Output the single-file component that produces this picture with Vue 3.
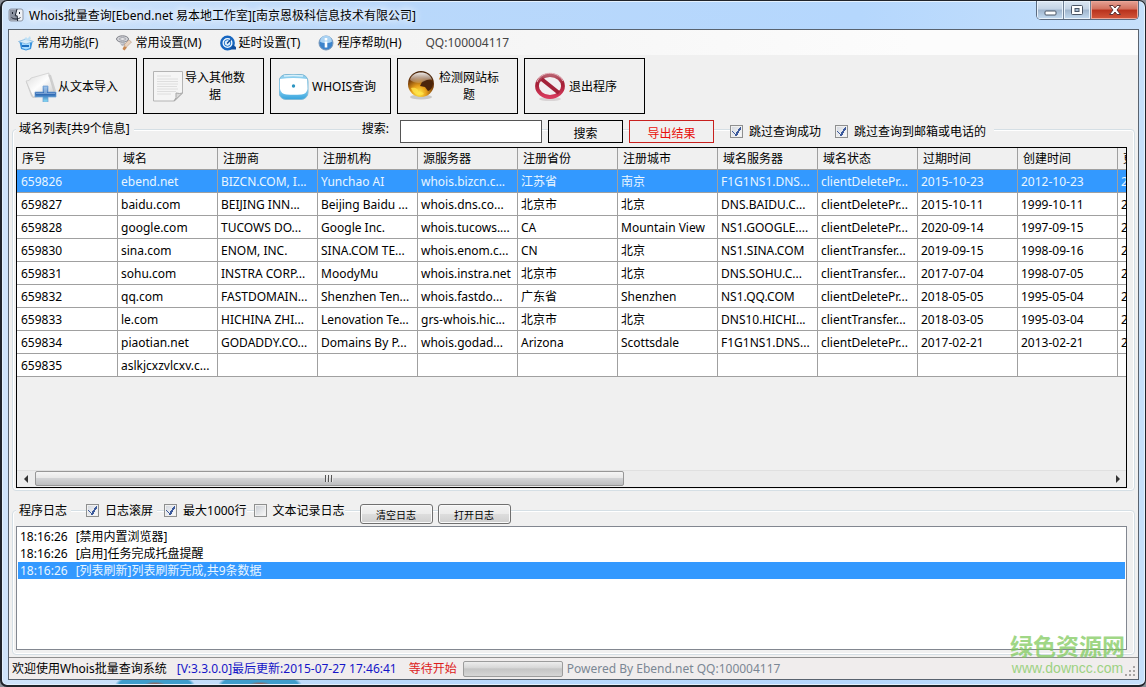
<script setup>
import { ref } from 'vue'

const menus = [
  { icon: 'box', label: '常用功能(F)' },
  { icon: 'tools', label: '常用设置(M)' },
  { icon: 'clock', label: '延时设置(T)' },
  { icon: 'info', label: '程序帮助(H)' }
]

const tools = [
  { icon: 'import', label: '从文本导入' },
  { icon: 'page', label: '导入其他数\n据' },
  { icon: 'whois', label: 'WHOIS查询' },
  { icon: 'globe', label: '检测网站标\n题' },
  { icon: 'exit', label: '退出程序' }
]

const columns = ['序号', '域名', '注册商', '注册机构', '源服务器', '注册省份', '注册城市', '域名服务器', '域名状态', '过期时间', '创建时间', '更']

const rows = [
  ['659826', 'ebend.net', 'BIZCN.COM, I...', 'Yunchao AI', 'whois.bizcn.c...', '江苏省', '南京', 'F1G1NS1.DNS...', 'clientDeletePr...', '2015-10-23', '2012-10-23', '2'],
  ['659827', 'baidu.com', 'BEIJING INN...', 'Beijing Baidu ...', 'whois.dns.co...', '北京市', '北京', 'DNS.BAIDU.C...', 'clientDeletePr...', '2015-10-11', '1999-10-11', '2'],
  ['659828', 'google.com', 'TUCOWS DO...', 'Google Inc.', 'whois.tucows....', 'CA', 'Mountain View', 'NS1.GOOGLE....', 'clientDeletePr...', '2020-09-14', '1997-09-15', '2'],
  ['659830', 'sina.com', 'ENOM, INC.', 'SINA.COM TE...', 'whois.enom.c...', 'CN', '北京', 'NS1.SINA.COM', 'clientTransfer...', '2019-09-15', '1998-09-16', '2'],
  ['659831', 'sohu.com', 'INSTRA CORP...', 'MoodyMu', 'whois.instra.net', '北京市', '北京', 'DNS.SOHU.C...', 'clientTransfer...', '2017-07-04', '1998-07-05', '2'],
  ['659832', 'qq.com', 'FASTDOMAIN...', 'Shenzhen Ten...', 'whois.fastdo...', '广东省', 'Shenzhen', 'NS1.QQ.COM', 'clientDeletePr...', '2018-05-05', '1995-05-04', '2'],
  ['659833', 'le.com', 'HICHINA ZHI...', 'Lenovation Te...', 'grs-whois.hic...', '北京市', '北京', 'DNS10.HICHI...', 'clientTransfer...', '2018-03-05', '1995-03-04', '2'],
  ['659834', 'piaotian.net', 'GODADDY.CO...', 'Domains By P...', 'whois.godad...', 'Arizona', 'Scottsdale', 'F1G1NS1.DNS...', 'clientDeletePr...', '2017-02-21', '2013-02-21', '2'],
  ['659835', 'aslkjcxzvlcxv.c...', '', '', '', '', '', '', '', '', '', '']
]

const logs = [
  { time: '18:16:26', text: '[禁用内置浏览器]' },
  { time: '18:16:26', text: '[启用]任务完成托盘提醒' },
  { time: '18:16:26', text: '[列表刷新]列表刷新完成,共9条数据' }
]

const selectedRow = ref(0)
const selectedLog = ref(2)
const keyword = ref('')
const skipDone = ref(true)
const skipContact = ref(true)
const autoScroll = ref(true)
const maxLines = ref(true)
const fileLog = ref(false)
</script>

<template>
  <div class="window">
    <header class="titlebar">
      <svg class="app-icon" viewBox="0 0 16 16" aria-hidden="true">
        <rect x="1" y="2" width="14" height="12" rx="2" fill="#eef1f6" stroke="#8d96a6" />
        <path d="M2 2.500h6.500L7 9h2l.5 4.500H3a1.500 1.500 0 0 1-1.500-1.500V3z" fill="#8b92a1" />
        <path d="M4.500 5v2M11.500 5v2" stroke="#1b2230" />
        <path d="M9 2 7.200 8.800h2L9.600 14M3.500 10.500c2.500 2 6.500 2 9 0" fill="none" stroke="#1b2230" />
      </svg>
      <h1 class="title">Whois批量查询[Ebend.net 易本地工作室][南京恩极科信息技术有限公司]</h1>
      <div class="controls">
        <button class="ctl min" aria-label="最小化">
          <svg viewBox="0 0 14 12"><rect x="2" y="7" width="11" height="4" rx="1" fill="#fff" stroke="#4b5666" /></svg>
        </button>
        <button class="ctl max" aria-label="最大化">
          <svg viewBox="0 0 14 12"><rect x="1.500" y="1.500" width="11" height="9" rx="1" fill="#fff" stroke="#4b5666" /><rect x="5" y="4.500" width="4" height="3" fill="#a9bdd2" stroke="#4b5666" /></svg>
        </button>
        <button class="ctl close" aria-label="关闭">
          <svg viewBox="0 0 14 12"><path d="M1.500 1.500h3.500l2 2.500 2-2.500h3.500L9 6l3.500 4.500H9L7 8l-2 2.500H1.500L5 6z" fill="#fff" stroke="#5e3434" /></svg>
        </button>
      </div>
    </header>

    <main class="client">
      <nav class="menubar">
        <button v-for="m in menus" :key="m.label" class="menu">
          <svg class="menu-icon" viewBox="0 0 16 16" aria-hidden="true">
            <g v-if="m.icon === 'box'">
              <path d="M1.500 7 8 4.500 14.500 7 13 14 8 15.500 3 14z" fill="#3a93de" />
              <path d="M4 7.500h8v5.500l-4 1.500-4-1.500z" fill="#a8dcff" />
              <path d="M.5 6.500 8 4l7.500 2.500L8 9z" fill="#d8ebf8" stroke="#78b3de" stroke-width=".7" />
              <path d="M6 4l2-2 1.500 1.500L12 1l1 3-3 2z" fill="#bfe0f5" />
              <path d="M4 10h7v2H4z" fill="#1d6fc2" />
            </g>
            <g v-else-if="m.icon === 'tools'">
              <ellipse cx="6.500" cy="4" rx="6" ry="3.200" fill="#d2d3d8" stroke="#80828a" />
              <ellipse cx="6.500" cy="4" rx="3" ry="1.300" fill="#f5f5f7" stroke="#8b8d95" stroke-width=".8" />
              <path d="M3 7c2 2 4 2 6 0l1 3-4 1z" fill="#b4b6be" />
              <path d="m8 10 5-5 2.500 2-5 5z" fill="#e9d3c0" stroke="#b9977d" stroke-width=".6" />
              <path d="m8 11 3 1.500L8.500 15.500l-2-1.500z" fill="#c98851" />
            </g>
            <g v-else-if="m.icon === 'clock'">
              <circle cx="7.500" cy="8" r="6.200" fill="#f6fbff" stroke="#1666c0" stroke-width="2.400" />
              <path d="M10 14.500h6V12l-3-2z" fill="#0e4e9f" />
              <circle cx="7.500" cy="8" r="3.300" fill="#e0f1fc" stroke="#1c73cc" />
              <path d="M7 8.500 11 4.500" stroke="#0d4794" stroke-width="1.500" />
            </g>
            <g v-else>
              <circle cx="8" cy="8" r="7" fill="#3c84cc" stroke="#7797ba" />
              <path d="M2 6.500a6 6 0 0 1 12 0c-2.500 2-9.500 2-12 0z" fill="#a9d2f3" />
              <path d="M8 3v2.500M8 6.500v6" stroke="#fff" stroke-width="2.600" />
            </g>
          </svg>
          <span>{{ m.label }}</span>
        </button>
        <span class="contact">QQ:100004117</span>
      </nav>

      <div class="toolbar">
        <button v-for="t in tools" :key="t.icon" class="tool">
          <svg class="tool-icon" viewBox="0 0 32 32" aria-hidden="true">
            <defs>
              <linearGradient id="paper" x1="0" y1="0" x2="1" y2="1"><stop offset="0" stop-color="#dcdcdc" /><stop offset=".5" stop-color="#fdfdfd" /><stop offset="1" stop-color="#c9c9c9" /></linearGradient>
              <linearGradient id="plus" x1="0" y1="0" x2="0" y2="1"><stop offset="0" stop-color="#90b8e4" /><stop offset=".5" stop-color="#2b62b0" /><stop offset="1" stop-color="#8ee6fa" /></linearGradient>
              <linearGradient id="tile" x1="0" y1="0" x2="0" y2="1"><stop offset="0" stop-color="#8ccdec" /><stop offset=".55" stop-color="#8fd3f4" /><stop offset="1" stop-color="#35a3dc" /></linearGradient>
              <radialGradient id="amber" cx=".42" cy=".85" r=".8"><stop offset="0" stop-color="#fff04a" /><stop offset=".35" stop-color="#e8a01b" /><stop offset=".75" stop-color="#70370a" /><stop offset="1" stop-color="#4a2408" /></radialGradient>
              <linearGradient id="gloss" x1="0" y1="0" x2="0" y2="1"><stop offset="0" stop-color="#fff" stop-opacity=".9" /><stop offset="1" stop-color="#fff" stop-opacity=".15" /></linearGradient>
              <linearGradient id="ban" x1="0" y1="0" x2="0" y2="1"><stop offset="0" stop-color="#b8606e" /><stop offset=".4" stop-color="#a31e35" /><stop offset="1" stop-color="#d83a5d" /></linearGradient>
            </defs>
            <g v-if="t.icon === 'import'">
              <path d="M1 12q3 0 4-3L23 4l3 1 5 16q-3 3-6 3L9 28q-2 0-3-2z" fill="#cfcfcf" />
              <path d="M1 11q4 0 5-3L24 3q-1 3 1 6l4 13L8 27z" fill="url(#paper)" stroke="#c5c5c5" stroke-width=".6" />
              <path d="M18 16h5v6h8v5h-8v5h-5v-5h-8v-5h8z" fill="url(#plus)" stroke="#6f9ed2" stroke-width=".7" />
              <path d="M19 17h3v6h8v1H11v-1h8z" fill="#b9d8f2" opacity=".5" />
            </g>
            <g v-else-if="t.icon === 'page'">
              <path d="M1.500 1.500h29V23l-8 8h-21z" fill="#f5f5f5" stroke="#b4b4b4" />
              <path d="M5 6h14M5 9h21M5 11.500h21M5 14h21M5 16.500h20M5 19h21M5 21.500h19M5 24h14" stroke="#dedede" />
              <path d="M22 31q3-3 2-8 4 1 6.500 0z" fill="#dadada" stroke="#a8a8a8" />
            </g>
            <g v-else-if="t.icon === 'whois'">
              <rect x="0" y="4.500" width="29" height="25" rx="7" fill="url(#tile)" stroke="#82bad6" />
              <path d="M1 9q13-2 27 0l.5 10q-1 5-6 5.500-8 .5-15 0-5.500-.5-6.500-5.500z" fill="#fff" />
              <path d="M5 6q9-1 19 0" fill="none" stroke="#d9f1fb" stroke-width="1.500" />
              <circle cx="14.500" cy="16" r="1.700" fill="#2c95c2" />
            </g>
            <g v-else-if="t.icon === 'globe'">
              <ellipse cx="15" cy="27" rx="11" ry="2.500" fill="#c8c8c8" />
              <circle cx="15" cy="14" r="13" fill="url(#amber)" />
              <path d="M16 12c4-3 9-2 11 0 0 5-2 8-5 9l-3-4-5-1z" fill="#4b250b" />
              <path d="M5 18c4-1 8 1 7 4 2-1 5 0 6 2-5 3-11 0-13-6z" fill="#ffe34b" opacity=".8" />
              <path d="M4 10C6 0 24 0 26 10c-3-1-6 0-9 2-4 2-9 1-13-2z" fill="url(#gloss)" />
            </g>
            <g v-else>
              <ellipse cx="17" cy="29" rx="11" ry="2" fill="#d8d4d5" />
              <ellipse cx="17" cy="16" rx="13" ry="11" fill="#f1eef0" stroke="url(#ban)" stroke-width="3.800" />
              <path d="M8.500 9 26 23" stroke="#a32139" stroke-width="3.800" />
              <path d="M4 12c4-11 20-12 26-1" fill="none" stroke="#e9b7c0" stroke-width="1" />
            </g>
          </svg>
          <span class="tool-label">{{ t.label }}</span>
        </button>
      </div>

      <section class="group results">
        <div class="group-head">
          <h2 class="group-title">域名列表[共9个信息]</h2>
          <label class="search-label" for="keyword">搜索:</label>
          <input id="keyword" v-model="keyword" class="search" type="text">
          <button class="flat search-btn">搜索</button>
          <button class="flat export-btn">导出结果</button>
          <label class="check skip"><input v-model="skipDone" type="checkbox"><span>跳过查询成功</span></label>
          <label class="check skip"><input v-model="skipContact" type="checkbox"><span>跳过查询到邮箱或电话的</span></label>
        </div>
        <div class="grid">
          <div class="grid-view">
            <table>
              <colgroup>
                <col v-for="(c, i) in columns" :key="c" :class="i ? 'col' : 'col-first'">
              </colgroup>
              <thead>
                <tr><th v-for="c in columns" :key="c" scope="col">{{ c }}</th></tr>
              </thead>
              <tbody>
                <tr v-for="(r, i) in rows" :key="r[0]" :class="{ selected: i === selectedRow }" @click="selectedRow = i">
                  <td v-for="(cell, j) in r" :key="j">{{ cell }}</td>
                </tr>
              </tbody>
            </table>
          </div>
          <div class="scrollbar">
            <button class="arrow" aria-label="向左滚动"><svg viewBox="0 0 4 8"><path d="M4 0v8L0 4z" fill="#333" /></svg></button>
            <div class="track">
              <div class="thumb"><i></i><i></i><i></i></div>
            </div>
            <button class="arrow" aria-label="向右滚动"><svg viewBox="0 0 4 8"><path d="M0 0v8l4-4z" fill="#333" /></svg></button>
          </div>
        </div>
      </section>

      <section class="group journal">
        <div class="group-head">
          <h2 class="group-title">程序日志</h2>
          <label class="check"><input v-model="autoScroll" type="checkbox"><span>日志滚屏</span></label>
          <label class="check"><input v-model="maxLines" type="checkbox"><span>最大1000行</span></label>
          <label class="check"><input v-model="fileLog" type="checkbox"><span>文本记录日志</span></label>
          <button class="aero first">清空日志</button>
          <button class="aero">打开日志</button>
        </div>
        <ul class="log">
          <li v-for="(l, i) in logs" :key="i" :class="{ selected: i === selectedLog }" @click="selectedLog = i">
            <time>{{ l.time }}</time><span>{{ l.text }}</span>
          </li>
        </ul>
      </section>

      <footer class="status">
        <span class="welcome">欢迎使用Whois批量查询系统</span>
        <span class="version">[V:3.3.0.0]最后更新:2015-07-27 17:46:41</span>
        <span class="state">等待开始</span>
        <div class="progress" role="progressbar" aria-label="进度" aria-valuenow="0"></div>
        <span class="powered">Powered By Ebend.net QQ:100004117</span>
        <svg class="grip" viewBox="0 0 11 11" aria-hidden="true"><path d="M8 0h2v2H8zM8 4h2v2H8zM4 4h2v2H4zM8 8h2v2H8zM4 8h2v2H4zM0 8h2v2H0z" fill="#a8a5a4" /></svg>
      </footer>
    </main>

    <div class="watermark">
      <strong>绿色资源网</strong>
      <span>www.downcc.com</span>
    </div>
  </div>
</template>

<style>
body {
  background: #8a8f98;
}
</style>

<style scoped>
* {
  box-sizing: border-box;
}

.window {
  position: relative;
  display: flex;
  flex-direction: column;
  min-height: 100vh;
  padding: 0 6px 5px;
  border: 1px solid #20242b;
  border-width: 1px 1px 2px 2px;
  border-radius: 7px;
  background:
    radial-gradient(ellipse 40px 12px at 153px 100%, #8a6a66 0 12%, #3f9dcc 28% 90%, transparent) no-repeat,
    radial-gradient(ellipse 42px 12px at 258px 100%, #8a6a66 0 12%, #3f9dcc 28% 90%, transparent) no-repeat,
    linear-gradient(90deg, #cfe3fa, #b9d8fb 35%, #b5d7fd 75%, #c6e0fb);
  box-shadow: inset 0 0 0 1px #e4f1fe;
  font: 12px/17px "Noto Sans", "Noto Sans CJK SC", sans-serif;
  color: #000;
}

button,
input {
  margin: 0;
  padding: 0;
  border: 0;
  background: none;
  font: inherit;
  color: inherit;
}

h1,
h2 {
  margin: 0;
  font: inherit;
}

.titlebar {
  display: flex;
  align-items: center;
  height: 28px;
}

.app-icon {
  width: 16px;
  height: 16px;
}

.title {
  flex: 1;
  margin-left: 5px;
  white-space: nowrap;
  text-shadow: 0 0 6px #fff, 0 0 10px #fff;
}

.controls {
  display: flex;
  align-self: flex-start;
  border: 1px solid #5b6b80;
  border-top: 0;
  border-radius: 0 0 5px 5px;
  overflow: hidden;
}

.ctl {
  display: flex;
  align-items: center;
  justify-content: center;
  width: 27px;
  height: 18px;
  border-right: 1px solid #6f8095;
  background: linear-gradient(#dce7f3, #c3d3e5 45%, #9fb4cc 50%, #c4dcf2);
  box-shadow: inset 0 0 0 1px #e9f2fb;
}

.ctl svg {
  width: 14px;
  height: 12px;
}

.close {
  width: 47px;
  border-right: 0;
  background: linear-gradient(#e5a295, #d2705d 45%, #b8321d 50%, #d3583c);
  box-shadow: inset 0 0 0 1px #eda798;
}

.client {
  display: flex;
  flex: 1;
  flex-direction: column;
  border: 1px solid #59636f;
  background: #f0f0f0;
}

.menubar {
  display: flex;
  align-items: center;
  height: 25px;
  padding-left: 9px;
  background: linear-gradient(90deg, #f0f0f0, #f4f4f4 35%, #fcfcfc 80%);
}

.menu {
  display: flex;
  align-items: center;
  gap: 3px;
  margin-right: 18px;
  white-space: nowrap;
}

.menu-icon {
  width: 16px;
  height: 16px;
}

.contact {
  margin-left: 6px;
  color: #444;
}

.toolbar {
  display: flex;
  gap: 6px;
  padding: 3px 7px 0;
}

.tool {
  display: flex;
  align-items: center;
  gap: 1px;
  width: 121px;
  height: 56px;
  padding-left: 8px;
  border: 1px solid #000;
}

.tool-icon {
  width: 32px;
  height: 32px;
}

.tool:last-child {
  gap: 4px;
}

.tool-label {
  white-space: pre-line;
}

.group {
  position: relative;
  display: flex;
  flex-direction: column;
  margin: 0 3px;
  padding: 0 8px 4px 4px;
}

.group::before {
  content: "";
  position: absolute;
  inset: 9px 0 0;
  border: 1px solid #d5dfe5;
  border-radius: 4px;
  box-shadow: inset 0 0 0 1px #fff;
  pointer-events: none;
}

.group-head {
  position: relative;
  display: flex;
  align-items: center;
  white-space: nowrap;
}

.group-title,
.check,
.search-label {
  background: #f0f0f0;
}

.results {
  flex: 1;
  margin-top: 6px;
  padding-bottom: 3px;
}

.results .group-head {
  height: 23px;
}

.group-title {
  padding: 0 4px 0 3px;
}

.results .group-title,
.search-label {
  align-self: flex-start;
}

.search-label {
  margin-left: auto;
  padding-right: 11px;
}

.results .group-title {
  min-width: 118px;
}

.search {
  width: 142px;
  height: 23px;
  padding: 0 4px;
  border: 1px solid #555;
  background: #fff;
}

.flat {
  height: 23px;
  margin-left: 6px;
  padding-top: 3px;
  border: 1px solid #000;
  background: #f0f0f0;
}

.search-btn {
  width: 75px;
}

.export-btn {
  width: 85px;
  border-color: #c8201e;
  color: #e8100c;
}

.check {
  display: flex;
  align-items: center;
  gap: 6px;
}

.check input {
  appearance: none;
  width: 13px;
  height: 13px;
  border: 1px solid #8e8f8f;
  background: linear-gradient(135deg, #cbcfd5, #f6f6f6) content-box #f4f4f4;
  padding: 1px;
}

.check input:checked {
  background:
    linear-gradient(45deg, transparent 44%, #3c5a9c 44% 62%, transparent 62%) 1px 5px / 4px 4px no-repeat,
    linear-gradient(122deg, transparent 42%, #3c5a9c 42% 62%, transparent 62%) 4px 1px / 6px 9px no-repeat,
    linear-gradient(135deg, #d5d9e0, #fafafa) content-box #f4f4f4;
}

.skip {
  padding-right: 8px;
}

.export-btn + .skip {
  margin-left: 16px;
  padding-right: 14px;
}

.skip:last-child {
  margin-right: 133px;
}

.grid {
  position: relative;
  display: flex;
  flex: 1;
  flex-direction: column;
  margin-top: 4px;
  border: 1px solid #000;
}

.grid-view {
  flex: 1;
  overflow: hidden;
}

table {
  width: 1201px;
  table-layout: fixed;
  border-collapse: separate;
  border-spacing: 0;
}

.col-first {
  width: 101px;
}

.col {
  width: 100px;
}

th,
td {
  overflow: hidden;
  padding: 0 0 0 3px;
  border: 0 solid #a0a0a0;
  border-width: 0 1px 1px 0;
  font-weight: 400;
  text-align: left;
  white-space: nowrap;
}

td:first-child {
  padding-left: 4px;
}

th {
  height: 22px;
  padding-left: 5px;
}

td {
  height: 23px;
  background: #fff;
}

.selected,
.selected td {
  background: #3399ff;
  color: #e9f6ff;
}

.scrollbar {
  display: flex;
  height: 17px;
  border-top: 1px solid #e0e0e0;
  background: #ececec;
}

.arrow {
  display: flex;
  align-items: center;
  justify-content: center;
  width: 17px;
}

.arrow svg {
  width: 4px;
  height: 8px;
}

.track {
  flex: 1;
  padding-left: 1px;
}

.thumb {
  display: flex;
  align-items: center;
  justify-content: center;
  gap: 1px;
  width: 54.8%;
  height: 15px;
  border: 1px solid #979797;
  border-radius: 2px;
  background: linear-gradient(#f5f5f5, #e8e8e8 45%, #d2d3d5 50%, #bdbec0);
}

.thumb i {
  width: 2px;
  height: 7px;
  border-left: 1px solid #555;
  background: #e8e8e8;
}

.journal {
  margin-top: 11px;
  padding-bottom: 5px;
}

.journal::before {
  inset: 8px 0 0;
}

.journal .group-head {
  height: 24px;
}

.journal .group-head > * {
  margin-bottom: 8px;
}

.journal .check {
  margin-left: 7px;
}

.journal .group-title + .check {
  margin-left: 15px;
  padding-right: 4px;
}

.journal .group-head .aero {
  align-self: flex-end;
  width: 73px;
  height: 20px;
  margin: 0 0 2px 5px;
  padding-top: 2px;
  border: 1px solid #707070;
  border-radius: 3px;
  background: linear-gradient(#f3f3f3, #ebebeb 48%, #dddddd 52%, #cfcfcf);
  box-shadow: inset 0 0 0 1px #fafafa;
  font-size: 10px;
  line-height: 14px;
}

.journal .group-head .first {
  margin-left: 15px;
}

.log {
  position: relative;
  min-height: 124px;
  margin: 0;
  padding: 1px;
  border: 1px solid #828790;
  background: #fff;
  list-style: none;
}

.log li {
  display: flex;
  gap: 8px;
  padding-left: 2px;
}

.status {
  display: flex;
  align-items: center;
  height: 22px;
  margin-top: 2px;
  padding: 0 2px 0 3px;
  border-top: 1px solid #8e8e8e;
  background: #f0eded;
  white-space: nowrap;
}

.version {
  margin-left: 10px;
  color: #1515c8;
}

.state {
  margin-left: 12px;
  color: #dd1c1c;
}

.progress {
  width: 100px;
  height: 16px;
  margin: 0 4px 0 6px;
  border: 1px solid #9c9c9c;
  border-radius: 2px;
  background: linear-gradient(#ededed, #d8d8d8 40%, #c5c5c5 50%, #d6d6d6);
}

.powered {
  color: #7b8794;
}

.grip {
  align-self: flex-end;
  width: 11px;
  height: 11px;
  margin: 0 0 2px auto;
}

.watermark {
  position: absolute;
  right: 20px;
  bottom: 8px;
  display: flex;
  flex-direction: column;
  align-items: center;
  color: #7cc858;
  opacity: 0.72;
  font-family: "Liberation Sans", "Noto Sans CJK SC", sans-serif;
  pointer-events: none;
}

.watermark strong {
  font-size: 23px;
  line-height: 24px;
}

.watermark span {
  font-size: 14px;
  line-height: 18px;
}
</style>
